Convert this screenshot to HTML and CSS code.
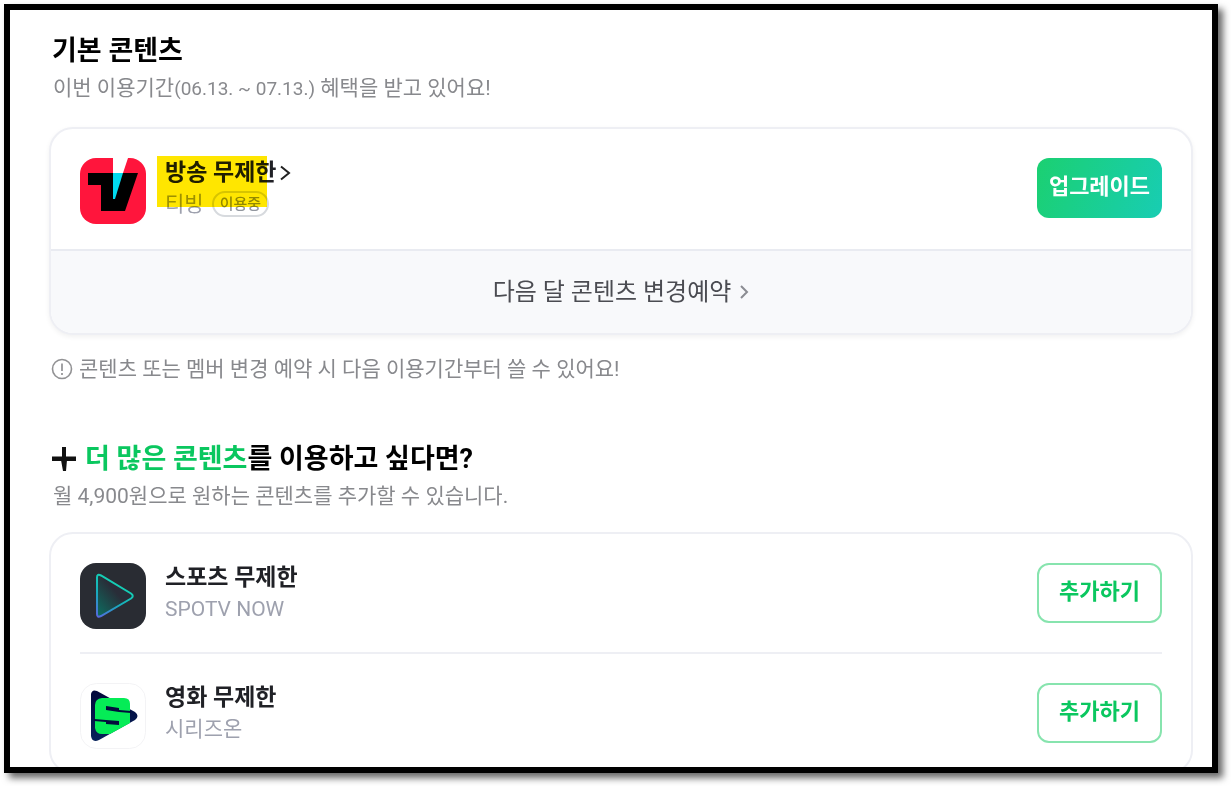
FILE: index.html
```html
<!DOCTYPE html>
<html lang="ko">
<head>
<meta charset="utf-8">
<meta name="viewport" content="width=device-width, initial-scale=1">
<title>기본 콘텐츠</title>
<link rel="stylesheet" href="styles.css">
</head>
<body>
<main class="frame">
  <section class="section">
    <h2 class="title">기본 콘텐츠</h2>
    <p class="desc">이번 이용기간<span class="period">(06.13. ~ 07.13.)</span> 혜택을 받고 있어요!</p>
    <div class="card card-current">
      <div class="item">
        <svg class="logo" viewBox="0 0 66 66" aria-hidden="true">
          <rect width="66" height="66" rx="16" fill="#ff153c"/>
          <path d="M33 0H48L43 15H33Z" fill="#fff"/>
          <path d="M8 15H58L45 53H21V27H8Z" fill="#000"/>
          <path d="M33 15H43L35 41H33Z" fill="#00dbef"/>
        </svg>
        <div class="info marked">
          <a class="name" href="#">방송 무제한<svg class="name-arrow" viewBox="0 0 12 16" aria-hidden="true"><path d="M2 1.500L10 8L2 14.500" fill="none" stroke="#222" stroke-width="2"/></svg></a>
          <p class="provider">티빙 <span class="badge">이용중</span></p>
        </div>
        <button class="btn btn-fill" type="button">업그레이드</button>
      </div>
      <a class="reserve" href="#">다음 달 콘텐츠 변경예약<svg class="reserve-arrow" viewBox="0 0 10 14" aria-hidden="true"><path d="M2 1L8 7L2 13" fill="none" stroke="#8b8c92" stroke-width="2"/></svg></a>
    </div>
    <p class="desc note"><svg class="note-icon" viewBox="0 0 22 22" aria-hidden="true"><circle cx="11" cy="11" r="9.5" fill="none" stroke="#929294" stroke-width="1.6"/><path d="M11 5.5V13M11 15V17" stroke="#929294" stroke-width="1.7"/></svg>콘텐츠 또는 멤버 변경 예약 시 다음 이용기간부터 쓸 수 있어요!</p>
  </section>
  <section class="section section-more">
    <h2 class="title"><svg class="plus" viewBox="0 0 24 24" aria-hidden="true"><path d="M0 9.500H24V14H0ZM10 0H14V10H10ZM9 13H15L14 24H11Z" fill="#111"/></svg><span><span class="accent">더 많은 콘텐츠</span>를 이용하고 싶다면?</span></h2>
    <p class="desc">월 4,900원으로 원하는 콘텐츠를 추가할 수 있습니다.</p>
    <div class="card card-more">
      <ul class="list">
        <li class="item">
          <svg class="logo" viewBox="0 0 66 66" aria-hidden="true">
            <defs>
              <linearGradient id="play-line" x1="0" y1="1" x2=".5" y2="0"><stop offset="0" stop-color="#5868df"/><stop offset=".45" stop-color="#18aabd"/><stop offset="1" stop-color="#13dcb1"/></linearGradient>
              <linearGradient id="play-fill" x1="0" y1="1" x2=".8" y2=".2"><stop offset="0" stop-color="#0b7062"/><stop offset=".7" stop-color="#292d38"/></linearGradient>
            </defs>
            <rect width="66" height="66" rx="16" fill="#292c33"/>
            <path d="M17 14.500Q17 10.500 21 12.500L51 30.500Q54.500 33 51 35.500L21 53Q17 55 17 51Z" fill="url(#play-fill)" stroke="url(#play-line)" stroke-width="2"/>
          </svg>
          <div class="info">
            <h3 class="name">스포츠 무제한</h3>
            <p class="provider">SPOTV NOW</p>
          </div>
          <button class="btn btn-line" type="button">추가하기</button>
        </li>
        <li class="item">
          <svg class="logo" viewBox="0 0 66 66" aria-hidden="true">
            <defs><linearGradient id="series-bg" x1="0" y1="0" x2="0" y2="1"><stop offset="0" stop-color="#02073a"/><stop offset="1" stop-color="#06225a"/></linearGradient></defs>
            <rect x=".5" y=".5" width="65" height="65" rx="16" fill="#fff" stroke="#f3f3f5"/>
            <path d="M11 11Q12 6 17 8L55 29Q60 33 55 37L19 57Q12 60 11 53Z" fill="url(#series-bg)"/>
            <path d="M22 15H44Q50 15 50 21V40L30 51H22Q16 51 15 45V22Q15 16 22 15Z" fill="#05ec56"/>
            <path d="M26 23L39 25V27L51 28V30L39 29L26 27ZM14 36L26 37L39 38V42L26 41V39L14 38Z" fill="#030b3d"/>
          </svg>
          <div class="info">
            <h3 class="name">영화 무제한</h3>
            <p class="provider">시리즈온</p>
          </div>
          <button class="btn btn-line" type="button">추가하기</button>
        </li>
      </ul>
    </div>
  </section>
</main>
</body>
</html>
```
FILE: styles.css
```css
* { box-sizing: border-box; }

body {
  margin: 0;
  padding: 4px 13px 13px 4px;
  background: #fff;
  color: #000;
  font-family: Roboto, "Noto Sans CJK KR", sans-serif;
}

h2, h3, p, ul { margin: 0; padding: 0; }
ul { list-style: none; }
a { color: inherit; text-decoration: none; }
svg { display: block; flex: none; }

.frame {
  height: calc(100vh - 17px);
  overflow: hidden;
  padding: 23px 19px 0 39px;
  border: 6px solid #000;
  background: #fff;
  box-shadow: 5px 5px 7px rgba(0, 0, 0, .6);
}

.section-more { padding-top: 58px; }

.title {
  display: flex;
  align-items: center;
  gap: 9px;
  padding-left: 3px;
  font-size: 27px;
  font-weight: 700;
  line-height: 36px;
}
.plus { width: 24px; height: 24px; }
.accent { color: #0ac75f; }

.desc {
  padding: 5px 0 0 4px;
  color: #88898d;
  font-size: 21px;
  line-height: 28px;
}
.period { font-size: 19px; }

.card {
  margin-top: 24px;
  overflow: hidden;
  border: 2px solid #eeeff4;
  border-radius: 24px;
  background: #fff;
}
.card-current { box-shadow: 0 2px 5px rgba(0, 0, 0, .06); }
.card-more { margin-top: 22px; }

.item {
  display: flex;
  align-items: flex-start;
  gap: 19px;
  padding: 29px 29px 25px;
}
.list { padding: 0 29px; }
.list .item { padding: 29px 0 23px; }
.list .item + .item { border-top: 2px solid #eeeff4; }

.logo { width: 66px; height: 66px; }

.info { position: relative; flex: 1; }
.marked::after {
  content: "";
  position: absolute;
  left: -8px;
  top: -2px;
  width: 110px;
  height: 51px;
  background: #ffe600;
  mix-blend-mode: multiply;
}

.name {
  display: flex;
  align-items: center;
  gap: 2px;
  color: #202126;
  font-size: 23px;
  font-weight: 700;
  line-height: 30px;
}
.name-arrow { width: 12px; height: 16px; }

.provider {
  display: flex;
  align-items: center;
  gap: 8px;
  padding-top: 2px;
  color: #9ea1ae;
  font-size: 21px;
  line-height: 28px;
}
.badge {
  padding: 0 6px;
  border: 2px solid #d7dade;
  border-radius: 13px;
  color: #92979f;
  font-size: 15px;
  font-weight: 500;
  line-height: 22px;
}

.btn {
  min-width: 125px;
  height: 60px;
  padding: 0 8px 8px;
  border: 0;
  border-radius: 12px;
  font-family: inherit;
  font-size: 22px;
  font-weight: 700;
}
.btn-fill {
  background: linear-gradient(110deg, #1bd071, #18cdb3);
  color: #fff;
}
.btn-line {
  border: 2px solid #87e4ae;
  background: #fff;
  color: #0ac75f;
}

.reserve {
  display: flex;
  align-items: center;
  justify-content: center;
  gap: 8px;
  padding: 23px 20px;
  border-top: 2px solid #e9ebf1;
  background: #f8f9fb;
  color: #4b4c52;
  font-size: 24px;
  line-height: 36px;
}
.reserve-arrow { width: 10px; height: 14px; }

.note {
  display: flex;
  align-items: center;
  gap: 6px;
  margin-top: 15px;
  padding-left: 2px;
}
.note-icon { width: 22px; height: 22px; }
```
